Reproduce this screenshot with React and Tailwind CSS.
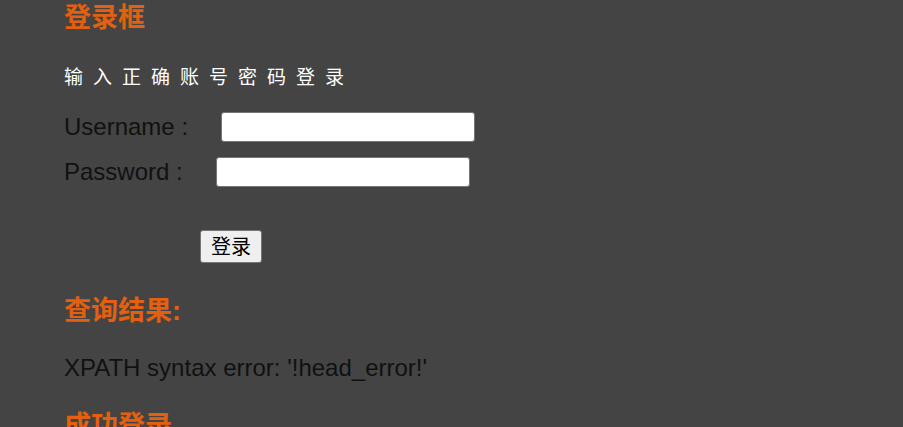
export default function App() {
  return (
    <div className="min-h-screen bg-[#444444] pl-[64px] font-['Liberation_Sans','Noto_Sans_CJK_SC',sans-serif] text-[#111111]">
      <h2 className="text-[27px] font-bold leading-[36px] text-[#e2600f]">登录框</h2>

      <p className="mt-[26px] text-[19px] leading-[28px] tracking-[10px] text-white font-['Noto_Sans_CJK_SC',sans-serif]">
        输入正确账号密码登录
      </p>

      <div className="mt-[22px] flex items-center">
        <span className="text-[24px] leading-[30px]">Username :</span>
        <input className="ml-[33px] h-[30px] w-[254px] rounded-[3px] border border-[#767676] bg-white" />
      </div>

      <div className="mt-[15px] flex items-center">
        <span className="text-[24px] leading-[30px]">Password :</span>
        <input type="password" className="ml-[33px] h-[30px] w-[254px] rounded-[3px] border border-[#767676] bg-white" />
      </div>

      <div className="mt-[43px] pl-[136px]">
        <button className="h-[33px] w-[62px] rounded-[3px] border border-[#767676] bg-[#efefef] text-[20px] leading-[28px] text-black">
          登录
        </button>
      </div>

      <h2 className="mt-[30px] text-[27px] font-bold leading-[36px] text-[#e2600f]">查询结果:</h2>

      <p className="mt-[25px] text-[24px] leading-[28px]">XPATH syntax error: '!head_error!'</p>

      <h2 className="mt-[26px] text-[27px] font-bold leading-[36px] text-[#e2600f]">成功登录</h2>
    </div>
  )
}
